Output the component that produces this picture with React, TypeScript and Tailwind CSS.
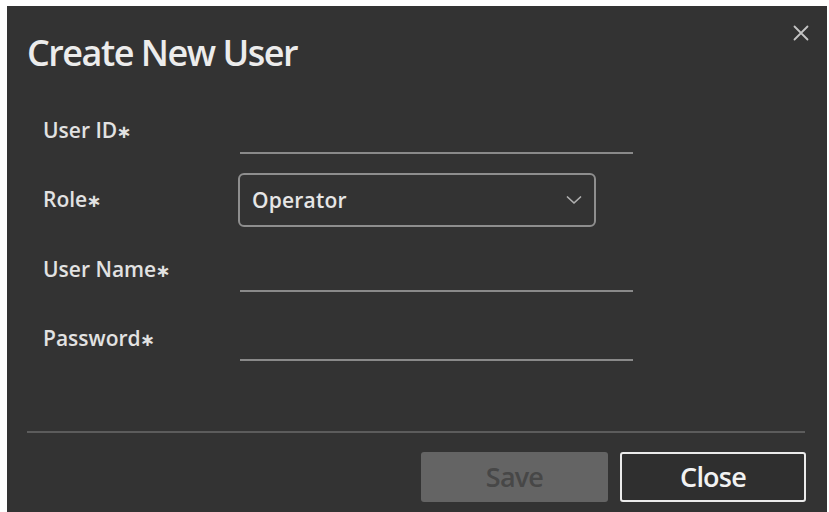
import React from "react";

function Label({ text, className = "" }: { text: string; className?: string }) {
  return (
    <div className={`text-[21px] leading-[24px] font-semibold text-[#e2e2e2] ${className}`}>
      {text}
      <span className="font-['DejaVu_Sans',sans-serif] text-[18px] font-bold ml-[-1px]">∗</span>
    </div>
  );
}

function LineRow({ label, mt, labelTop }: { label: string; mt: string; labelTop: string }) {
  return (
    <div className={`grid grid-cols-[197px_393px] h-[44px] ${mt}`}>
      <Label text={label} className={labelTop} />
      <div className="h-full border-b-2 border-[#8a8a8a]" />
    </div>
  );
}

export default function App() {
  return (
    <div className="w-[829px] h-[512px] bg-white pt-[6px] pl-[7px] pr-[2px] overflow-hidden">
      <div className="relative h-[506px] bg-[#333333] flex flex-col font-['Open_Sans',sans-serif]">
        <svg
          className="absolute left-[786px] top-[19px]"
          width="16"
          height="16"
          viewBox="0 0 16 16"
          fill="none"
          stroke="#c4c4c4"
          strokeWidth="1.8"
          strokeLinecap="round"
        >
          <path d="M1.5 1.5 L14.5 14.5 M14.5 1.5 L1.5 14.5" />
        </svg>

        <div className="pl-[20px] pt-[24px] h-[46px] box-content text-[36px] leading-[46px] font-semibold tracking-[-1.5px] text-[#ececec]">
          Create New User
        </div>

        <div className="pl-[36px] pt-[34px] flex flex-col">
          <LineRow label="User ID" mt="" labelTop="pt-[8px]" />

          <div className="grid grid-cols-[197px_393px] h-[54px] mt-[19px] items-center">
            <Label text="Role" />
            <div className="ml-[-2px] w-[358px] h-[54px] rounded-[6px] border-2 border-[#8e8e8e] flex items-center justify-between pl-[12px] pr-[12px]">
              <span className="text-[21px] leading-[24px] font-semibold text-[#e6e6e6] tracking-[0.2px]">Operator</span>
              <svg width="16" height="10" viewBox="0 0 16 10" fill="none" stroke="#b0b0b0" strokeWidth="1.7" strokeLinecap="round" strokeLinejoin="round">
                <path d="M1.5 2 L8 8 L14.5 2" />
              </svg>
            </div>
          </div>

          <LineRow label="User Name" mt="mt-[21px]" labelTop="pt-[9px]" />
          <LineRow label="Password" mt="mt-[25px]" labelTop="pt-[9px]" />
        </div>

        <div className="mt-auto mx-[20px] mr-[22px] h-[2px] bg-[#5c5c5c]" />
        <div className="flex justify-end gap-[12px] mt-[19px] mb-[10px] pr-[21px]">
          <div className="w-[187px] h-[50px] rounded-[3px] bg-[#646464] flex items-center justify-center text-[27px] font-semibold text-[#474747] tracking-[-0.8px]">
            Save
          </div>
          <div className="w-[186px] h-[50px] rounded-[3px] border-2 border-[#ebebeb] bg-[#2f2f2f] flex items-center justify-center text-[27px] font-semibold text-[#f2f2f2] tracking-[-0.8px]">
            Close
          </div>
        </div>
      </div>
    </div>
  );
}
